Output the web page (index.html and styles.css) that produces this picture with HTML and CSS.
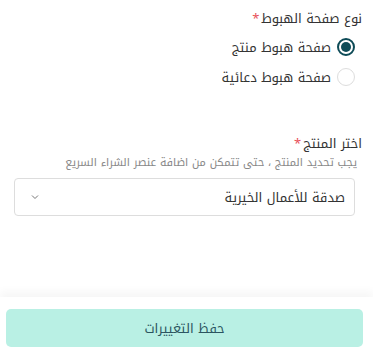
FILE: index.html
```html
<!DOCTYPE html>
<html lang="ar" dir="rtl">
<head>
<meta charset="utf-8">
<link rel="stylesheet" href="styles.css">
</head>
<body>
<div class="page">
  <div class="content">
    <div class="field">
      <div class="label">نوع صفحة الهبوط<span class="req">*</span></div>
      <div class="radios">
        <label class="radio-row"><span class="radio checked"></span><span class="radio-text">صفحة هبوط منتج</span></label>
        <label class="radio-row"><span class="radio"></span><span class="radio-text">صفحة هبوط دعائية</span></label>
      </div>
    </div>
    <div class="field field-product">
      <div class="label">اختر المنتج<span class="req">*</span></div>
      <div class="hint">يجب تحديد المنتج ، حتى تتمكن من اضافة عنصر الشراء السريع</div>
      <div class="select">
        <span class="select-value">صدقة للأعمال الخيرية</span>
        <svg class="chev" width="8" height="6" viewBox="0 0 8 6"><path d="M1 1.5 L4 4.5 L7 1.5" fill="none" stroke="#777" stroke-width="1"/></svg>
      </div>
    </div>
  </div>
  <div class="footer">
    <button class="save">حفظ التغييرات</button>
  </div>
</div>
</body>
</html>
```
FILE: styles.css
```css
html, body { margin: 0; padding: 0; background: #fff; }
body { font-family: "Noto Kufi Arabic", "DejaVu Sans", sans-serif; color: #333; width: 373px; height: 348px; overflow: hidden; }
.page { display: flex; flex-direction: column; height: 348px; }
.content { flex: 1; padding: 8px 11px 0 14px; }
.field { display: flex; flex-direction: column; }
.label { font-size: 13px; color: #333; line-height: 21px; }
.req { color: #e84f5a; margin-right: 2px; }
.radios { margin-top: 3px; display: flex; flex-direction: column; }
.radio-row { display: flex; align-items: center; gap: 6px; height: 30px; margin-right: 7px; }
.radio { width: 18px; height: 18px; border-radius: 50%; border: 1px solid #ddd; box-sizing: border-box; position: relative; flex: none; }
.radio.checked { border: 2px solid #0e4b57; }
.radio.checked::after { content: ""; position: absolute; inset: 2px; border-radius: 50%; background: #0e4b57; }
.radio-text { font-size: 13px; color: #333; line-height: 21px; }
.field-product { margin-top: 41px; }
.hint { font-size: 11px; color: #888; line-height: 18px; margin-right: 5px; }
.select { margin-top: 6px; margin-right: 7px; height: 38px; border: 1px solid #ddd; border-radius: 4px; box-sizing: border-box; display: flex; align-items: center; justify-content: space-between; padding: 0 9px 0 16px; }
.select-value { font-size: 13px; color: #333; line-height: 21px; }
.footer { height: 51px; box-shadow: 0 -6px 8px rgba(0,0,0,0.035); padding: 12px 10px 0 6px; box-sizing: border-box; }
.save { width: 100%; height: 38px; border: none; border-radius: 5px; background: #b9f0e4; color: #2b5560; font-family: inherit; font-size: 13px; line-height: 21px; }
```
